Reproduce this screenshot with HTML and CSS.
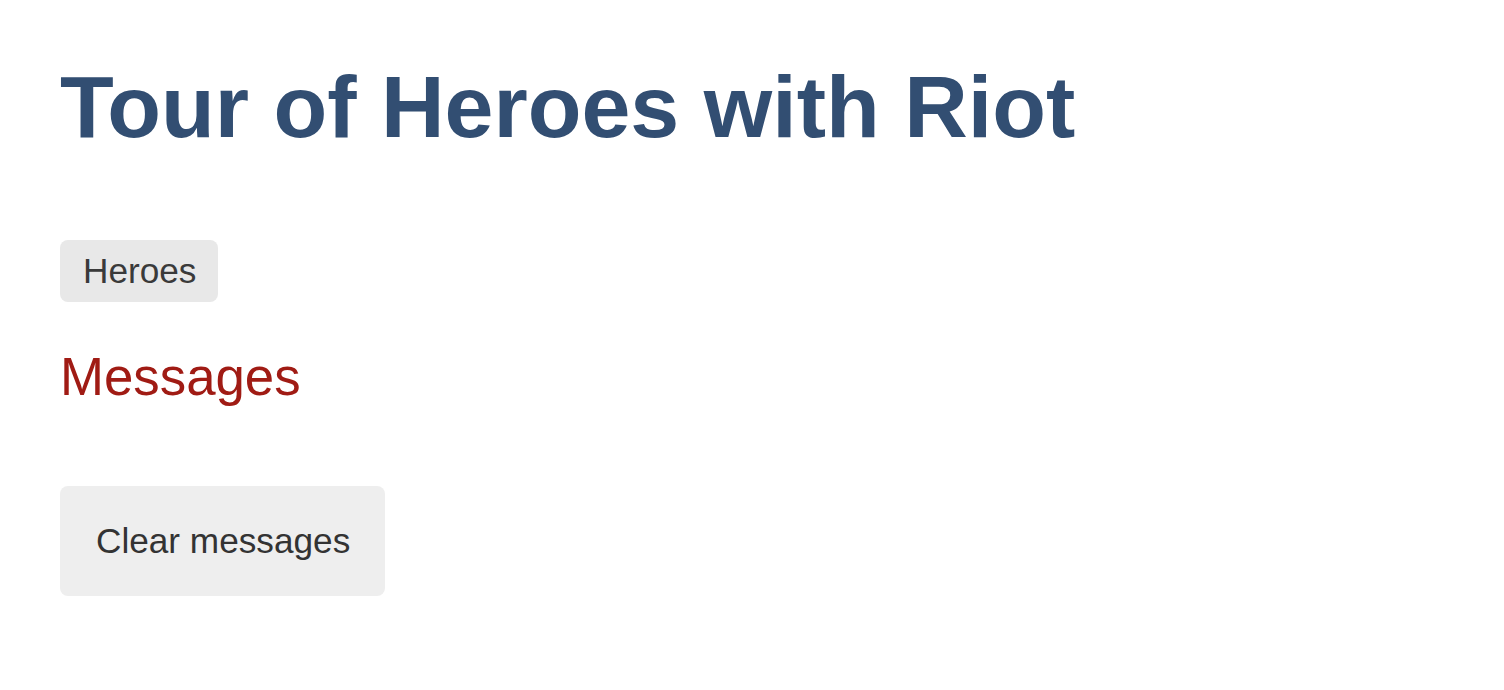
FILE: index.html
```html
<!DOCTYPE html>
<html>
<head>
<meta charset="utf-8">
<title>Tour of Heroes with Riot</title>
<link rel="stylesheet" href="styles.css">
</head>
<body>
<div class="app">
  <h1 class="title">Tour of Heroes with Riot</h1>
  <nav class="nav">
    <a class="nav-link" href="#">Heroes</a>
  </nav>
  <section class="messages">
    <h2 class="messages-title">Messages</h2>
    <button class="clear-btn">Clear messages</button>
  </section>
</div>
</body>
</html>
```

FILE: styles.css
```css
html, body {
  margin: 0;
  padding: 0;
  background: #ffffff;
}

body {
  font-family: "Liberation Sans", Arial, sans-serif;
}

.app {
  padding: 58px 0 0 60px;
  display: flex;
  flex-direction: column;
  align-items: flex-start;
}

.title {
  margin: 0;
  font-size: 88px;
  font-weight: bold;
  color: #324e72;
  line-height: 98px;
}

.nav {
  margin-top: 84px;
  display: flex;
}

.nav-link {
  display: inline-block;
  font-size: 35.2px;
  line-height: 40px;
  padding: 11px 22px 11px 23px;
  background: #e8e8e8;
  color: #3a3a3a;
  text-decoration: none;
  border-radius: 8px;
}

.messages {
  display: flex;
  flex-direction: column;
  align-items: flex-start;
}

.messages-title {
  margin: 45px 0 0 0;
  font-size: 52.8px;
  font-weight: normal;
  line-height: 59px;
  color: #a01b14;
}

.clear-btn {
  margin-top: 80px;
  font-family: "Liberation Sans", Arial, sans-serif;
  font-size: 35.2px;
  line-height: 40px;
  padding: 35px 35px 35px 36px;
  background: #eeeeee;
  color: #333333;
  border: none;
  border-radius: 8px;
}
```
